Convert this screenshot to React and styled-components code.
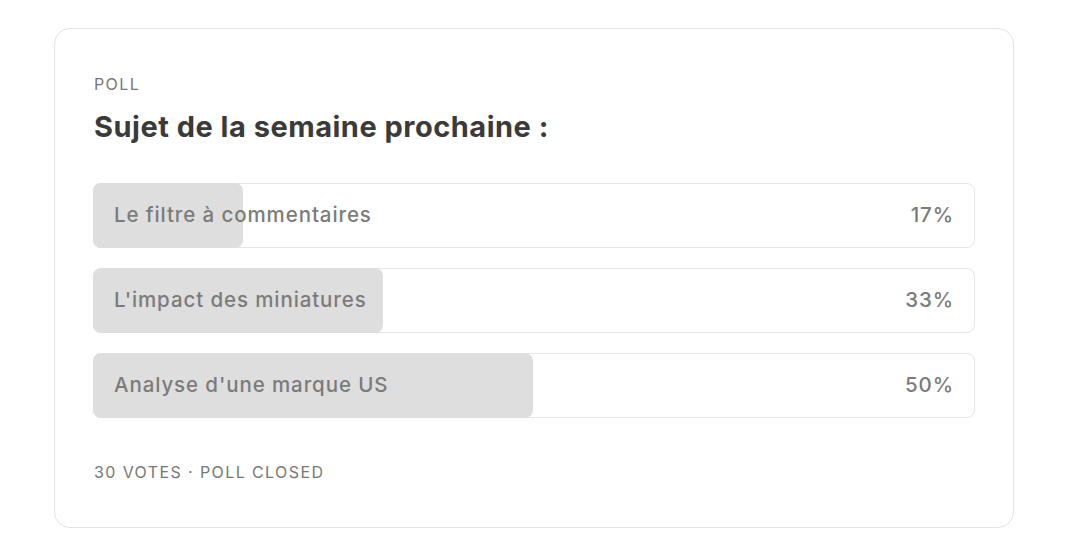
import React from "react";
import styled, { createGlobalStyle } from "styled-components";

const GlobalStyle = createGlobalStyle`
  html, body {
    margin: 0;
    padding: 0;
    background: #ffffff;
    font-family: Inter, "Noto Sans", sans-serif;
  }
`;

const Page = styled.div`
  display: flex;
  padding: 28px 0 0 54px;
`;

const Card = styled.section`
  box-sizing: border-box;
  width: 960px;
  height: 500px;
  border: 1px solid #e3e3e3;
  border-radius: 16px;
  padding: 45px 38px 0 38px;
  display: flex;
  flex-direction: column;
`;

const Kicker = styled.div`
  padding-left: 1px;
  font-size: 16px;
  line-height: 20px;
  letter-spacing: 1.4px;
  color: #777777;
  text-transform: uppercase;
`;

const Title = styled.h2`
  margin: 15px 0 0 1px;
  font-size: 29px;
  line-height: 36px;
  font-weight: 700;
  color: #3a3a3a;
  letter-spacing: 0.5px;
`;

const Options = styled.div`
  margin-top: 38px;
  display: flex;
  flex-direction: column;
  gap: 20px;
`;

const Option = styled.div`
  position: relative;
  box-sizing: border-box;
  height: 65px;
  border: 1px solid #e5e5e5;
  border-radius: 8px;
  display: flex;
  align-items: center;
  justify-content: space-between;
  padding: 0 20px;
  font-size: 20.5px;
  font-weight: 500;
  letter-spacing: 0.9px;
  color: #7b7b7b;
`;

const Fill = styled.div`
  position: absolute;
  top: -1px;
  bottom: -1px;
  left: -1px;
  background: #dedede;
  border-radius: 8px;
`;

const Label = styled.span`
  position: relative;
  top: -1px;
`;

const Percent = styled.span`
  position: relative;
  top: -1px;
`;

const Footer = styled.div`
  margin-top: 44px;
  padding-left: 1px;
  font-size: 16px;
  line-height: 20px;
  letter-spacing: 1.4px;
  color: #777777;
  text-transform: uppercase;
`;

const options = [
  { label: "Le filtre à commentaires", pct: 17 },
  { label: "L'impact des miniatures", pct: 33 },
  { label: "Analyse d'une marque US", pct: 50 },
];

export default function App() {
  return (
    <>
      <GlobalStyle />
      <Page>
        <Card>
          <Kicker>Poll</Kicker>
          <Title>Sujet de la semaine prochaine :</Title>
          <Options>
            {options.map((o) => (
              <Option key={o.label}>
                <Fill style={{ width: `${o.pct}%` }} />
                <Label>{o.label}</Label>
                <Percent>{o.pct}%</Percent>
              </Option>
            ))}
          </Options>
          <Footer>30 votes · Poll closed</Footer>
        </Card>
      </Page>
    </>
  );
}
